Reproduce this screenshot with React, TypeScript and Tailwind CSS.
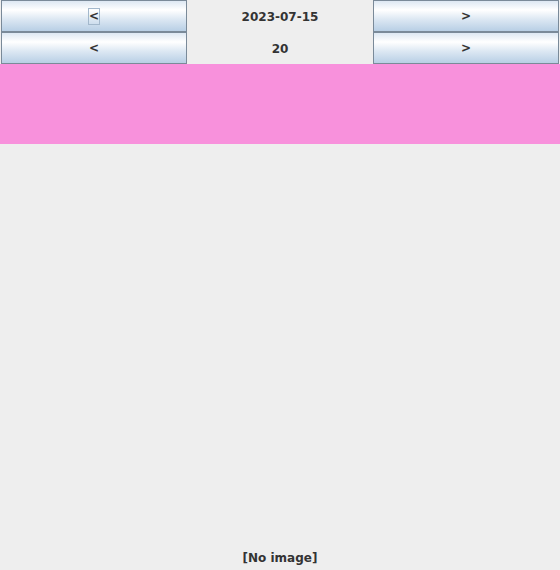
import React from "react";

const font = { fontFamily: '"DejaVu Sans", sans-serif' };

function JButton({ label, focused }: { label: string; focused?: boolean }) {
  return (
    <div className="h-8 w-[186px] border border-[#7a8a99] bg-[linear-gradient(to_bottom,#dde8f3_0%,#ffffff_30%,#dde8f3_60%,#b8cfe5_100%)] flex items-center justify-center pt-[1px]">
      {focused ? (
        <span className="w-[12px] h-[17px] border border-[#a3b8cc] flex items-center justify-center text-[12px] font-bold leading-[15px] text-[#333333]">
          {label}
        </span>
      ) : (
        <span className="text-[12px] font-bold leading-[15px] text-[#333333]">{label}</span>
      )}
    </div>
  );
}

export default function App() {
  return (
    <div className="w-[560px] h-[570px] bg-[#eeeeee] flex flex-col" style={font}>
      <div className="flex flex-col pl-[1px]">
        <div className="flex h-8">
          <JButton label="<" focused />
          <div className="w-[186px] flex items-center justify-center text-[12px] font-bold text-[#333333] pt-[1px]">
            2023-07-15
          </div>
          <JButton label=">" />
        </div>
        <div className="flex h-8">
          <JButton label="<" />
          <div className="w-[186px] flex items-center justify-center text-[12px] font-bold text-[#333333] pt-[1px]">
            20
          </div>
          <JButton label=">" />
        </div>
      </div>
      <div className="h-20 bg-[#f891dc]" />
      <div className="flex-1" />
      <div className="h-[26px] flex items-start justify-center text-[12px] font-bold text-[#333333] pt-[5px]">
        [No image]
      </div>
    </div>
  );
}
